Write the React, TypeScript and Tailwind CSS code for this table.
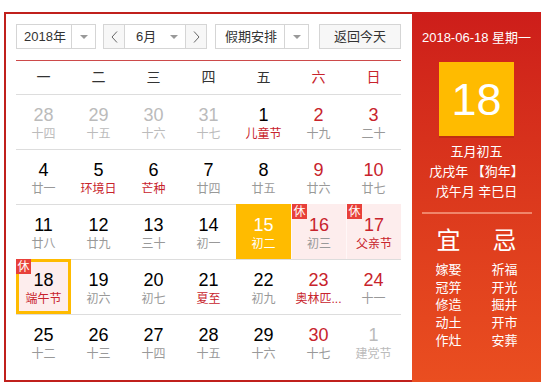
import React from "react";

type Day = {
  n: number;
  sub: string;
  other?: boolean;
  weekend?: boolean;
  fest?: boolean;
  rest?: boolean;
  selected?: boolean;
  today?: boolean;
};

const rows: Day[][] = [
  [
    { n: 28, sub: "十四", other: true },
    { n: 29, sub: "十五", other: true },
    { n: 30, sub: "十六", other: true },
    { n: 31, sub: "十七", other: true },
    { n: 1, sub: "儿童节", fest: true },
    { n: 2, sub: "十九", weekend: true },
    { n: 3, sub: "二十", weekend: true },
  ],
  [
    { n: 4, sub: "廿一" },
    { n: 5, sub: "环境日", fest: true },
    { n: 6, sub: "芒种", fest: true },
    { n: 7, sub: "廿四" },
    { n: 8, sub: "廿五" },
    { n: 9, sub: "廿六", weekend: true },
    { n: 10, sub: "廿七", weekend: true },
  ],
  [
    { n: 11, sub: "廿八" },
    { n: 12, sub: "廿九" },
    { n: 13, sub: "三十" },
    { n: 14, sub: "初一" },
    { n: 15, sub: "初二", selected: true },
    { n: 16, sub: "初三", weekend: true, rest: true },
    { n: 17, sub: "父亲节", weekend: true, fest: true, rest: true },
  ],
  [
    { n: 18, sub: "端午节", fest: true, rest: true, today: true },
    { n: 19, sub: "初六" },
    { n: 20, sub: "初七" },
    { n: 21, sub: "夏至", fest: true },
    { n: 22, sub: "初九" },
    { n: 23, sub: "奥林匹...", weekend: true, fest: true },
    { n: 24, sub: "十一", weekend: true },
  ],
  [
    { n: 25, sub: "十二" },
    { n: 26, sub: "十三" },
    { n: 27, sub: "十四" },
    { n: 28, sub: "十五" },
    { n: 29, sub: "十六" },
    { n: 30, sub: "十七", weekend: true },
    { n: 1, sub: "建党节", other: true },
  ],
];

const weekdays = ["一", "二", "三", "四", "五", "六", "日"];
const yi = ["嫁娶", "冠笄", "修造", "动土", "作灶"];
const ji = ["祈福", "开光", "掘井", "开市", "安葬"];

function Caret() {
  return (
    <svg width="8" height="4" viewBox="0 0 8 4">
      <path d="M0 0h8L4 4z" fill="#999" />
    </svg>
  );
}

function Chevron({ dir }: { dir: "l" | "r" }) {
  return (
    <svg width="7" height="12" viewBox="0 0 7 12">
      <path
        d={dir === "l" ? "M6 0.5L1 6l5 5.5" : "M1 0.5L6 6l-5 5.5"}
        fill="none"
        stroke="#666"
        strokeWidth="1"
      />
    </svg>
  );
}

function Cell({ d, first }: { d: Day; first: boolean }) {
  let numColor = "text-black";
  let subColor = "text-[#999]";
  if (d.weekend) numColor = "text-[#c8232c]";
  if (d.fest) subColor = "text-[#c8232c]";
  if (d.other) {
    numColor = "text-[#bbb]";
    subColor = "text-[#bbb]";
  }
  let box = "border-t border-[#ddd] pt-[10px]";
  if (d.selected) {
    box = "border-t border-[#ffbb00] bg-[#ffbb00] pt-[10px]";
    numColor = "text-white";
    subColor = "text-white";
  } else if (d.today) {
    box = "border-[3px] border-[#ffbb00] bg-[#fdeded] pt-[8px]";
  } else if (d.rest) {
    box = "border-t border-[#fdeded] bg-[#fdeded] pt-[10px]";
  }
  return (
    <div
      className={`relative flex h-[55px] flex-col items-center ${box} ${
        d.rest && !first && !d.today ? "border-l border-l-[#fff7f7]" : ""
      }`}
    >
      {d.rest && (
        <span
          className={`absolute flex h-[15px] w-[15px] items-center justify-center bg-[#e8403a] text-[12px] leading-none text-white ${
            d.today ? "-left-[3px] -top-[3px]" : "-top-px left-0"
          }`}
        >
          休
        </span>
      )}
      <span className={`text-[18px] leading-[20px] ${numColor}`}>{d.n}</span>
      <span className={`mt-[1px] whitespace-nowrap text-[12px] leading-[16px] ${subColor}`}>
        {d.sub}
      </span>
    </div>
  );
}

export default function App() {
  return (
    <div className="h-[387px] w-[546px] bg-white pl-[4px] pt-[12px] font-['Liberation_Sans','Noto_Sans_CJK_SC',sans-serif]">
      <div className="flex h-[370px] w-[537px]">
        <div className="w-[408px] border-y-2 border-l-2 border-[#c0201c] pl-[10px] pr-[11px] pt-[10px]">
          <div className="flex h-[25px] text-[13px] text-[#333]">
            <div className="flex w-[80px] border border-[#d5d5d5]">
              <div className="flex flex-1 items-center justify-center pl-[2px]">2018年</div>
              <div className="flex w-[24px] items-center justify-center border-l border-[#d5d5d5]">
                <Caret />
              </div>
            </div>
            <div className="ml-[7px] flex w-[104px] border border-[#d5d5d5]">
              <div className="flex w-[21px] items-center justify-center border-r border-[#d5d5d5] bg-[#f7f7f7]">
                <Chevron dir="l" />
              </div>
              <div className="flex flex-1 items-center pl-[11px]">
                <span>6月</span>
                <span className="ml-[14px] flex">
                  <Caret />
                </span>
              </div>
              <div className="flex w-[21px] items-center justify-center border-l border-[#d5d5d5] bg-[#f7f7f7]">
                <Chevron dir="r" />
              </div>
            </div>
            <div className="ml-[8px] flex w-[94px] border border-[#d5d5d5]">
              <div className="flex flex-1 items-center justify-center pl-[2px]">假期安排</div>
              <div className="flex w-[24px] items-center justify-center border-l border-[#d5d5d5]">
                <Caret />
              </div>
            </div>
            <div className="ml-[10px] flex w-[82px] items-center justify-center border border-[#d5d5d5] bg-[#f7f7f7]">
              返回今天
            </div>
          </div>
          <div className="mt-[11px] h-px bg-[#cd4a4a]" />
          <div className="grid h-[33px] grid-cols-7 items-center text-[14px]">
            {weekdays.map((w, i) => (
              <div key={w} className={`text-center ${i >= 5 ? "text-[#c8232c]" : "text-[#333]"}`}>
                {w}
              </div>
            ))}
          </div>
          {rows.map((r, ri) => (
            <div key={ri} className="grid grid-cols-7">
              {r.map((d, i) => (
                <Cell key={i} d={d} first={i === 0} />
              ))}
            </div>
          ))}
        </div>

        <div className="flex flex-1 flex-col items-center bg-linear-to-b from-[#cd1d1a] to-[#ea4e20] pt-[16px] text-white">
          <div className="text-[13px] leading-[20px]">2018-06-18 星期一</div>
          <div className="mt-[14px] flex h-[74px] w-[75px] items-center justify-center bg-[#ffbb00] text-[45px] leading-none shadow-[0_2px_0_rgba(150,40,0,0.35)]">
            18
          </div>
          <div className="mt-[6px] text-center text-[13px] leading-[20px]">
            <div>五月初五</div>
            <div>戊戌年 【狗年】</div>
            <div>戊午月 辛巳日</div>
          </div>
          <div className="mt-[10px] h-[2px] w-[110px] bg-[#f0856a]" />
          <div className="mt-[13px] grid grid-cols-[56px_56px] text-center">
            <div className="text-[24px] leading-[28px]">宜</div>
            <div className="text-[24px] leading-[28px]">忌</div>
            <div className="mt-[6px] text-[13px] leading-[17.7px]">
              {yi.map((t) => (
                <div key={t}>{t}</div>
              ))}
            </div>
            <div className="mt-[6px] text-[13px] leading-[17.7px]">
              {ji.map((t) => (
                <div key={t}>{t}</div>
              ))}
            </div>
          </div>
        </div>
      </div>
    </div>
  );
}
